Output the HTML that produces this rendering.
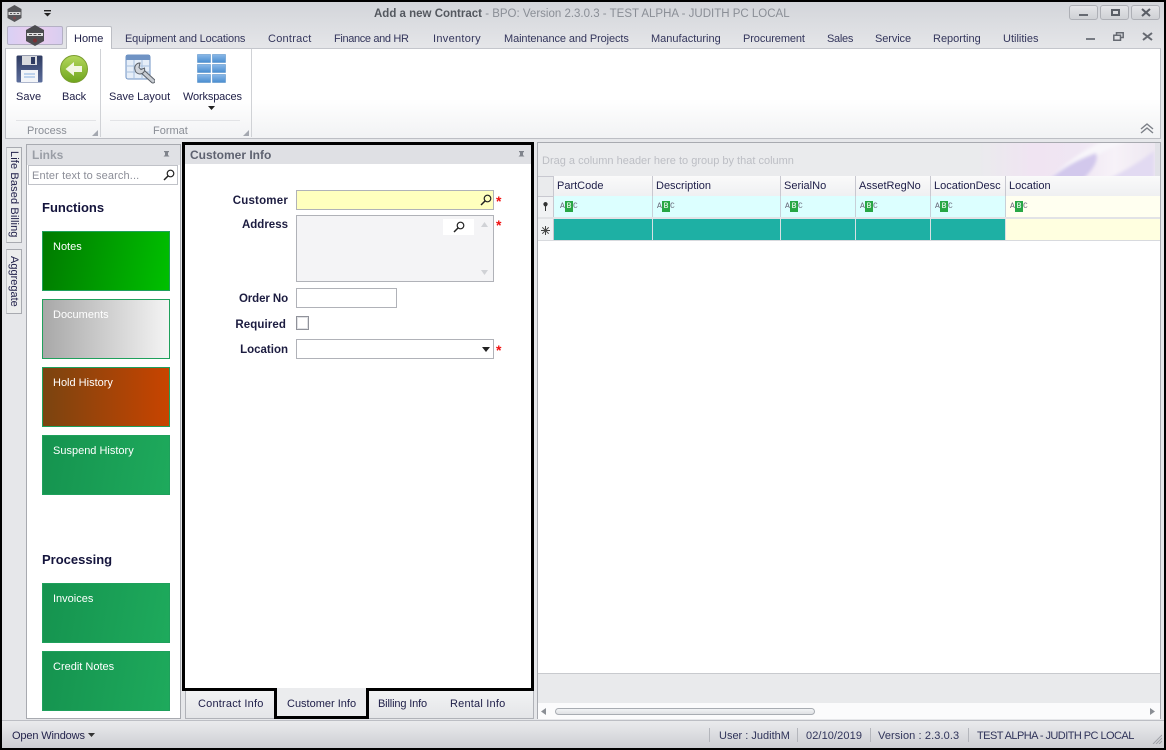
<!DOCTYPE html>
<html><head><meta charset="utf-8"><style>
html,body{margin:0;padding:0;width:1166px;height:750px;overflow:hidden;background:#000}
*{box-sizing:border-box}
body{font-family:"Liberation Sans",sans-serif;font-size:11px;color:#1e1e46}
div,span,svg{position:absolute}
.t{white-space:nowrap;line-height:14px}
.b{font-weight:bold}
.tab{top:32px;color:#34365c}
.tile{left:42px;width:128px;height:60px;border:1px solid #1fa05c;color:#fff}
.tile span{left:10px;top:8px;white-space:nowrap;line-height:14px;font-size:11px}
.lab{font-weight:bold;white-space:nowrap;text-align:right;right:878px;line-height:14px;color:#1c1c40;font-size:11.5px}
.star{color:#f01010;font-weight:bold;left:496px;font-size:14px;line-height:14px}
.hc{top:176px;height:20px;border-right:1px solid #c8c8d0;background:linear-gradient(#fafafa,#eff0f2)}
.hc span{left:3px;top:3px;white-space:nowrap;line-height:14px;font-size:11px;color:#20204a}
.fc{top:196px;height:21px;background:#dcffff;border-right:1px solid #c8d0d8}
.abc{left:7px;top:5px;width:18px;height:11px;font:8px/11px "Liberation Mono",monospace;color:#667}
.abc i{position:absolute;left:5px;top:0;width:8px;height:11px;background:#28a745;color:#fff;font-style:normal;text-align:center;line-height:11px}
.abc u{position:absolute;text-decoration:none;top:0}
.dc{top:219px;height:22px;background:#1eb0a4;border-right:1px solid #d8e0e4}
</style></head><body>
<div id="win" style="left:2px;top:2px;width:1162px;height:746px;background:linear-gradient(#d3d5da 0,#e4e5e8 44px);overflow:hidden">
<div style="left:-2px;top:-2px;width:1166px;height:750px">

<!-- title bar -->
<svg style="left:6px;top:5px" width="17" height="17" viewBox="0 0 17 17"><polygon points="8.5,0 15.5,4 15.5,13 8.5,17 1.5,13 1.5,4" fill="#56565a"/><rect x="2.500" y="7" width="12" height="3" fill="#d8d8d8"/><path d="M4 8.500h2M7.500 8.500h2M11 8.500h2" stroke="#56565a"/><circle cx="8.500" cy="13" r="1.500" fill="#7a4a4c"/></svg>
<svg style="left:43px;top:10px" width="9" height="7" viewBox="0 0 9 7"><rect x="1" y="0" width="7" height="1.4" fill="#222"/><polygon points="1,3 8,3 4.5,6.5" fill="#222"/></svg>
<div class="t" style="left:374px;top:7px;color:#5b6069;font-size:11.5px"><span class="b" style="position:static;color:#54585f">Add a new Contract</span> <span style="position:static;color:#8a8e96">- BPO: Version 2.3.0.3 - TEST ALPHA - JUDITH PC LOCAL</span></div>

<div style="left:1069px;top:5px;width:29px;height:15px;border:1px solid #aeb0b6;border-radius:3px;background:linear-gradient(#e4e5e8,#cfd1d5)"><div style="left:9px;top:8px;width:9px;height:2px;background:#666a72"></div></div>
<div style="left:1100px;top:5px;width:29px;height:15px;border:1px solid #aeb0b6;border-radius:3px;background:linear-gradient(#e4e5e8,#cfd1d5)"><div style="left:10px;top:3px;width:9px;height:7px;border:2px solid #5a5e66"></div></div>
<div style="left:1131px;top:5px;width:29px;height:15px;border:1px solid #aeb0b6;border-radius:3px;background:linear-gradient(#e4e5e8,#cfd1d5)"><svg style="left:9px;top:2px" width="10" height="9" viewBox="0 0 10 9"><path d="M1 1l8 7M9 1l-8 7" stroke="#5a5e66" stroke-width="2"/></svg></div>

<!-- app button -->
<div style="left:7px;top:26px;width:56px;height:19px;border:1px solid #b4b0c4;border-radius:2px;background:linear-gradient(90deg,#d8d0f4,#eccdf0 50%,#d8cef0)"></div>
<svg style="left:25px;top:25px" width="20" height="21" viewBox="0 0 20 21"><polygon points="10,0 19,5 19,16 10,21 1,16 1,5" fill="#4c4c50"/><rect x="2" y="8" width="16" height="3" fill="#e2e2e2"/><path d="M4 9.500h3M8.500 9.500h3M13 9.500h3" stroke="#4c4c50"/><circle cx="10" cy="15.500" r="2" fill="#7a3034"/></svg>

<!-- ribbon tabs -->
<div style="left:66px;top:26px;width:46px;height:23px;background:#fff;border:1px solid #bcbec4;border-bottom:0;border-radius:2px 2px 0 0"></div>
<div class="t" style="left:74px;top:32px;color:#1e1e46">Home</div>
<div class="t tab" style="left:125px;letter-spacing:-.17px">Equipment and Locations</div>
<div class="t tab" style="left:268px;letter-spacing:.25px">Contract</div>
<div class="t tab" style="left:334px;letter-spacing:-.35px">Finance and HR</div>
<div class="t tab" style="left:433px;letter-spacing:.3px">Inventory</div>
<div class="t tab" style="left:504px;letter-spacing:-.1px">Maintenance and Projects</div>
<div class="t tab" style="left:651px">Manufacturing</div>
<div class="t tab" style="left:743px;letter-spacing:-.1px">Procurement</div>
<div class="t tab" style="left:827px;letter-spacing:-.3px">Sales</div>
<div class="t tab" style="left:875px;letter-spacing:-.1px">Service</div>
<div class="t tab" style="left:933px">Reporting</div>
<div class="t tab" style="left:1003px">Utilities</div>
<div style="left:1086px;top:38px;width:9px;height:2px;background:#777b83"></div>
<svg style="left:1113px;top:32px" width="11" height="9" viewBox="0 0 11 9"><path d="M3.5 2.5V.8h6.7v4.7H8M.8 3.2h6.7v5H.8z" fill="none" stroke="#666a72" stroke-width="1.5"/></svg>
<svg style="left:1142px;top:32px" width="11" height="9" viewBox="0 0 11 9"><path d="M1 1l9 7M10 1l-9 7" stroke="#666a72" stroke-width="2"/></svg>

<!-- ribbon body -->
<div style="left:5px;top:48px;width:1156px;height:91px;background:linear-gradient(#fff 0,#fff 50px,#f1f2f4 90px);border:1px solid #bcbec4;border-top:1px solid #c4c6cc"></div>
<div style="left:67px;top:48px;width:44px;height:1px;background:#fff"></div>
<div style="left:100px;top:49px;width:1px;height:88px;background:#d0d2d6"></div>
<div style="left:251px;top:49px;width:1px;height:88px;background:#d0d2d6"></div>
<div style="left:16px;top:120px;width:80px;height:1px;background:#e2e3e6"></div>
<div style="left:110px;top:120px;width:130px;height:1px;background:#e2e3e6"></div>

<!-- save icon -->
<svg style="left:16px;top:55px" width="27" height="28" viewBox="0 0 27 28"><defs><linearGradient id="sv" x1="0" y1="0" x2="0" y2="1"><stop offset="0" stop-color="#2e3a60"/><stop offset="1" stop-color="#5c6e9c"/></linearGradient></defs><path d="M0.500 2q0-1.500 1.500-1.500h23q1.500 0 1.500 1.500v24q0 1.500-1.500 1.500H2q-1.500 0-1.500-1.500z" fill="url(#sv)"/><rect x="6" y="1" width="15" height="9" fill="#d8dade"/><rect x="15" y="2" width="4" height="7" fill="#2e3a60"/><rect x="5" y="15" width="17" height="12" fill="#f2f4f8"/><path d="M8 19h11M8 22h11" stroke="#88b0e0"/></svg>
<div class="t" style="left:16px;top:90px;color:#1e1e46">Save</div>
<!-- back icon -->
<svg style="left:60px;top:55px" width="28" height="28" viewBox="0 0 28 28"><defs><linearGradient id="g" x1="0" y1="0" x2="0" y2="1"><stop offset="0" stop-color="#b4d85c"/><stop offset="1" stop-color="#6ea41c"/></linearGradient></defs><circle cx="14" cy="14" r="13.5" fill="url(#g)" stroke="#7a9c30"/><path d="M5.5 14L14 7v4h8v6h-8v4z" fill="#f2f6e2"/></svg>
<div class="t" style="left:62px;top:90px;color:#1e1e46;letter-spacing:-.1px">Back</div>
<!-- save layout icon -->
<svg style="left:125px;top:54px" width="30" height="30" viewBox="0 0 30 30"><rect x="1" y="1" width="24" height="24" rx="2" fill="#e6eef8" stroke="#6f93c4"/><rect x="1" y="1" width="24" height="5" fill="#6f93c4"/><path d="M1 12h24M1 18h24M9 6v19M17 6v19" stroke="#a8c0de"/><path d="M28 27L17 17" stroke="#5a6068" stroke-width="5" stroke-linecap="round"/><path d="M28 27L17 17" stroke="#c8ccd2" stroke-width="3" stroke-linecap="round"/><path d="M15 9a5 5 0 0 0-5 6.500a5 5 0 0 0 8.500 3a5 5 0 0 0 1-4.500l-3.500 1.500l-2-2z" fill="#d0d4da" stroke="#5a6068"/></svg>
<div class="t" style="left:109px;top:90px;color:#1e1e46">Save Layout</div>
<!-- workspaces icon -->
<svg style="left:197px;top:54px" width="29" height="29" viewBox="0 0 29 29"><defs><linearGradient id="w" x1="0" y1="0" x2="0" y2="1"><stop offset="0" stop-color="#8ab8e8"/><stop offset="1" stop-color="#4a8ed0"/></linearGradient></defs><g fill="url(#w)" stroke="#4a88c4" stroke-width=".5"><rect x=".5" y=".5" width="13" height="8"/><rect x="15.500" y=".5" width="13" height="8"/><rect x=".5" y="10.500" width="13" height="8"/><rect x="15.500" y="10.500" width="13" height="8"/><rect x=".5" y="20.500" width="13" height="8"/><rect x="15.500" y="20.500" width="13" height="8"/></g></svg>
<div class="t" style="left:183px;top:90px;color:#1e1e46;letter-spacing:-.15px">Workspaces</div>
<svg style="left:208px;top:106px" width="8" height="5" viewBox="0 0 8 5"><polygon points="0,0 7,0 3.5,4" fill="#222"/></svg>
<div class="t" style="left:27px;top:124px;color:#8a8e96">Process</div>
<div class="t" style="left:153px;top:124px;color:#8a8e96">Format</div>
<svg style="left:92px;top:130px" width="6" height="6" viewBox="0 0 6 6"><polygon points="6,0 6,6 0,6" fill="#a4a8b0"/></svg>
<svg style="left:243px;top:130px" width="6" height="6" viewBox="0 0 6 6"><polygon points="6,0 6,6 0,6" fill="#a4a8b0"/></svg>
<svg style="left:1140px;top:123px" width="14" height="11" viewBox="0 0 14 11"><path d="M1 6l6-5 6 5M1 10l6-5 6 5" fill="none" stroke="#7c8088" stroke-width="1.4"/></svg>

<!-- main bg -->
<div style="left:5px;top:139px;width:1156px;height:581px;background:#e6e7ea"></div>

<!-- side tabs -->
<div style="left:6px;top:147px;width:16px;height:96px;background:#eceded;border:1px solid #a8aab0;border-left-color:#c4c6ca"></div>
<div class="t" style="left:14px;top:151px;font-size:11px;color:#20204a;letter-spacing:.12px;transform-origin:0 0;transform:translate(7px,0) rotate(90deg)">Life Based Billing</div>
<div style="left:6px;top:249px;width:16px;height:65px;background:#eceded;border:1px solid #a8aab0;border-left-color:#c4c6ca"></div>
<div class="t" style="left:14px;top:256px;font-size:11px;color:#20204a;transform-origin:0 0;transform:translate(7px,0) rotate(90deg)">Aggregate</div>

<!-- links panel -->
<div style="left:26px;top:144px;width:155px;height:575px;background:#fff;border:1px solid #a8aab0"></div>
<div style="left:27px;top:145px;width:153px;height:20px;background:#e0e1e5"></div>
<div class="t b" style="left:32px;top:148px;color:#9a9ea6;font-size:12px">Links</div>
<svg style="left:162px;top:150px" width="9" height="10" viewBox="0 0 9 10"><path d="M2 1h5v1l-1 .5V5l1.500 1.500H1.500L3 5V2.500L2 2zM4.500 6.500V10" fill="#80848c"/></svg>
<div style="left:28px;top:165px;width:150px;height:20px;background:#fff;border:1px solid #c0c2c8"></div>
<div class="t" style="left:32px;top:169px;color:#8c8e98;letter-spacing:.12px">Enter text to search...</div>
<svg style="left:163px;top:169px" width="12" height="12" viewBox="0 0 12 12"><circle cx="7.500" cy="4.500" r="3.300" fill="none" stroke="#222" stroke-width="1.200"/><path d="M5 7L1 11" stroke="#222" stroke-width="1.500"/></svg>
<div class="t b" style="left:42px;top:201px;font-size:13px;color:#14143c">Functions</div>
<div class="tile" style="top:231px;background:linear-gradient(100deg,#007a00,#00c000)"><span>Notes</span></div>
<div class="tile" style="top:299px;background:linear-gradient(90deg,#a8a8a8,#f4f4f4)"><span>Documents</span></div>
<div class="tile" style="top:367px;background:linear-gradient(90deg,#7a4410,#c84400)"><span>Hold History</span></div>
<div class="tile" style="top:435px;background:linear-gradient(100deg,#15934f,#1eaa5c)"><span>Suspend History</span></div>
<div class="t b" style="left:42px;top:553px;font-size:13px;color:#14143c">Processing</div>
<div class="tile" style="top:583px;background:linear-gradient(100deg,#15934f,#1eaa5c)"><span>Invoices</span></div>
<div class="tile" style="top:651px;background:linear-gradient(100deg,#15934f,#1eaa5c)"><span>Credit Notes</span></div>

<!-- customer info panel -->
<div style="left:185px;top:145px;width:346px;height:543px;background:#fff"></div>
<div style="left:185px;top:145px;width:346px;height:19px;background:#dfe0e4"></div>
<div class="t b" style="left:190px;top:148px;color:#5e6270;font-size:12px">Customer Info</div>
<svg style="left:517px;top:150px" width="9" height="10" viewBox="0 0 9 10"><path d="M2 1h5v1l-1 .5V5l1.500 1.500H1.500L3 5V2.500L2 2zM4.500 6.500V10" fill="#80848c"/></svg>

<div class="lab" style="top:194px;letter-spacing:.2px">Customer</div>
<div style="left:296px;top:190px;width:198px;height:20px;background:#ffffbe;border:1px solid #b0b2b8"></div>
<svg style="left:480px;top:194px" width="12" height="12" viewBox="0 0 12 12"><circle cx="7.500" cy="4.500" r="3.300" fill="none" stroke="#222" stroke-width="1.200"/><path d="M5 7L1 11" stroke="#222" stroke-width="1.500"/></svg>
<div class="star" style="top:194px">*</div>

<div class="lab" style="top:218px">Address</div>
<div style="left:296px;top:215px;width:198px;height:67px;background:#f4f4f6;border:1px solid #b0b2b8"></div>
<div style="left:443px;top:219px;width:31px;height:16px;background:#fff"></div>
<svg style="left:453px;top:221px" width="12" height="12" viewBox="0 0 12 12"><circle cx="7.500" cy="4.500" r="3.300" fill="none" stroke="#222" stroke-width="1.200"/><path d="M5 7L1 11" stroke="#222" stroke-width="1.500"/></svg>
<svg style="left:481px;top:222px" width="7" height="5" viewBox="0 0 7 5"><polygon points="0,5 7,5 3.500,0" fill="#d0d2d6"/></svg>
<svg style="left:481px;top:270px" width="7" height="5" viewBox="0 0 7 5"><polygon points="0,0 7,0 3.500,5" fill="#d0d2d6"/></svg>
<div class="star" style="top:218px">*</div>

<div class="lab" style="top:292px;letter-spacing:-.1px">Order No</div>
<div style="left:296px;top:288px;width:101px;height:20px;background:#fff;border:1px solid #b0b2b8"></div>

<div class="lab" style="top:318px;right:880px;letter-spacing:.1px">Required</div>
<div style="left:296px;top:316px;width:13px;height:14px;background:#fff;border:1px solid #90929a;box-shadow:inset 0 0 0 1px #e0e1e4"></div>

<div class="lab" style="top:343px">Location</div>
<div style="left:296px;top:339px;width:198px;height:20px;background:#fff;border:1px solid #b0b2b8"></div>
<svg style="left:482px;top:347px" width="8" height="5" viewBox="0 0 8 5"><polygon points="0,0 8,0 4,5" fill="#222"/></svg>
<div class="star" style="top:343px">*</div>

<!-- black highlight around panel -->
<div style="left:182px;top:142px;width:352px;height:3px;background:#000"></div>
<div style="left:182px;top:142px;width:3px;height:549px;background:#000"></div>
<div style="left:531px;top:142px;width:3px;height:549px;background:#000"></div>
<div style="left:182px;top:688px;width:95px;height:3px;background:#000"></div>
<div style="left:366px;top:688px;width:168px;height:3px;background:#000"></div>

<!-- bottom tabs -->
<div style="left:185px;top:691px;width:349px;height:28px;background:linear-gradient(#f2f3f4,#e4e5e8);border-bottom:1px solid #b0b2b8;border-right:1px solid #b0b2b8;border-left:1px solid #b0b2b8"></div>
<div style="left:277px;top:688px;width:89px;height:29px;background:#ebecee"></div>
<div style="left:274px;top:688px;width:3px;height:31px;background:#000"></div>
<div style="left:366px;top:688px;width:3px;height:31px;background:#000"></div>
<div style="left:274px;top:716px;width:95px;height:3px;background:#000"></div>
<div class="t" style="left:198px;top:697px;color:#20204a;letter-spacing:.2px">Contract Info</div>
<div class="t" style="left:287px;top:697px;color:#20204a">Customer Info</div>
<div class="t" style="left:378px;top:697px;color:#20204a;letter-spacing:-.15px">Billing Info</div>
<div class="t" style="left:450px;top:697px;color:#20204a;letter-spacing:.2px">Rental Info</div>

<!-- grid -->
<div style="left:537px;top:142px;width:624px;height:577px;background:#fff;border:1px solid #a8aab0"></div>
<div style="left:538px;top:143px;width:622px;height:33px;background:#eaebed"></div>
<svg style="left:538px;top:143px" width="622" height="33" viewBox="0 0 622 33"><defs><linearGradient id="dk" x1="0" y1="0" x2="1" y2="0"><stop offset="0" stop-color="#eaebed"/><stop offset=".3" stop-color="#f0e4f2"/><stop offset=".55" stop-color="#efe6f3"/><stop offset=".75" stop-color="#f7f2f8"/><stop offset="1" stop-color="#ece6f0"/></linearGradient><filter id="bl" x="-20%" y="-20%" width="140%" height="140%"><feGaussianBlur stdDeviation="1.500"/></filter></defs><rect x="440" y="0" width="182" height="33" fill="url(#dk)"/><g filter="url(#bl)"><path d="M512 36Q535 12 565 -2L590 -2Q545 15 535 36Z" fill="#f8f6fa"/><path d="M512 36Q530 20 558 10Q562 20 545 36Z" fill="#d2c8ec"/><path d="M570 36Q595 24 616 8V36Z" fill="#e2daf2"/></g><rect x="617" y="0" width="5" height="33" fill="#e2e2e8"/></svg>
<div class="t" style="left:542px;top:154px;color:#bcbec4">Drag a column header here to group by that column</div>

<div style="left:538px;top:176px;width:622px;height:20px;background:linear-gradient(#fafafa,#eff0f2);border-top:1px solid #c8c8d0"></div>
<div style="left:538px;top:176px;width:16px;height:20px;background:#eaebed;border-right:1px solid #c8c8d0;border-top:1px solid #c8c8d0"></div>
<div class="hc" style="left:554px;width:99px"><span>PartCode</span></div>
<div class="hc" style="left:653px;width:128px"><span>Description</span></div>
<div class="hc" style="left:781px;width:75px"><span>SerialNo</span></div>
<div class="hc" style="left:856px;width:75px"><span>AssetRegNo</span></div>
<div class="hc" style="left:931px;width:75px"><span>LocationDesc</span></div>
<div class="hc" style="left:1006px;width:154px;border-right:0"><span>Location</span></div>

<div style="left:538px;top:196px;width:16px;height:21px;background:#f1f2f4;border-right:1px solid #c8c8d0;border-top:1px solid #c8c8d0"></div>
<svg style="left:542px;top:202px" width="7" height="9" viewBox="0 0 7 9"><path d="M3.500 0a2.200 2.200 0 0 1 1.500 3.800L4 4.500V9H3V4.500L2 3.800A2.200 2.200 0 0 1 3.500 0z" fill="#333"/></svg>
<div class="fc" style="left:554px;width:99px"><span class="abc" style="left:6px"><u style="left:0">A</u><i>B</i><u style="left:13px">C</u></span></div>
<div class="fc" style="left:653px;width:128px"><span class="abc" style="left:4px"><u style="left:0">A</u><i>B</i><u style="left:13px">C</u></span></div>
<div class="fc" style="left:781px;width:75px"><span class="abc" style="left:4px"><u style="left:0">A</u><i>B</i><u style="left:13px">C</u></span></div>
<div class="fc" style="left:856px;width:75px"><span class="abc" style="left:4px"><u style="left:0">A</u><i>B</i><u style="left:13px">C</u></span></div>
<div class="fc" style="left:931px;width:75px"><span class="abc" style="left:4px"><u style="left:0">A</u><i>B</i><u style="left:13px">C</u></span></div>
<div class="fc" style="left:1006px;width:154px;background:#fffff0;border-right:0"><span class="abc" style="left:4px"><u style="left:0">A</u><i>B</i><u style="left:13px">C</u></span></div>

<div style="left:538px;top:217px;width:622px;height:2px;background:#e2e3e6"></div>
<div style="left:538px;top:219px;width:16px;height:22px;background:#f1f2f4;border-right:1px solid #c8c8d0"></div>
<svg style="left:541px;top:226px" width="9" height="9" viewBox="0 0 9 9"><path d="M4.500 0v9M0 4.500h9M1.300 1.300l6.400 6.400M7.700 1.300l-6.400 6.400" stroke="#444" stroke-width="1"/></svg>
<div class="dc" style="left:554px;width:99px"></div>
<div class="dc" style="left:653px;width:128px"></div>
<div class="dc" style="left:781px;width:75px"></div>
<div class="dc" style="left:856px;width:75px"></div>
<div class="dc" style="left:931px;width:75px"></div>
<div style="left:1006px;top:219px;width:154px;height:22px;background:#ffffe0"></div>
<div style="left:538px;top:240px;width:622px;height:1px;background:#d8dade"></div>

<!-- grid footer + scrollbar -->
<div style="left:538px;top:673px;width:622px;height:30px;background:#e9eaec;border-top:1px solid #c8cace"></div>
<div style="left:538px;top:703px;width:622px;height:16px;background:#fbfbfc"></div>
<div style="left:555px;top:708px;width:260px;height:7px;background:linear-gradient(#f2f3f5,#dfe1e4);border:1px solid #a8acb2;border-radius:4px"></div>
<svg style="left:541px;top:708px" width="5" height="7" viewBox="0 0 5 7"><polygon points="5,0 5,7 0,3.500" fill="#8a8e94"/></svg>
<svg style="left:1150px;top:708px" width="5" height="7" viewBox="0 0 5 7"><polygon points="0,0 0,7 5,3.500" fill="#8a8e94"/></svg>

<!-- status bar -->
<div style="left:2px;top:721px;width:1162px;height:27px;background:linear-gradient(#eaebed,#cdced3)"></div>
<div style="left:2px;top:720px;width:1162px;height:1px;background:#bcbec4"></div>
<div class="t" style="left:12px;top:729px;color:#24244c;letter-spacing:-.15px">Open Windows</div>
<svg style="left:88px;top:733px" width="7" height="4" viewBox="0 0 7 4"><polygon points="0,0 7,0 3.500,4" fill="#333"/></svg>
<div style="left:709px;top:728px;width:1px;height:14px;background:#b4b6bc"></div>
<div class="t" style="left:719px;top:729px;color:#30345a">User : JudithM</div>
<div style="left:797px;top:728px;width:1px;height:14px;background:#b4b6bc"></div>
<div class="t" style="left:806px;top:729px;color:#30345a;letter-spacing:.1px">02/10/2019</div>
<div style="left:870px;top:728px;width:1px;height:14px;background:#b4b6bc"></div>
<div class="t" style="left:878px;top:729px;color:#30345a;letter-spacing:.1px">Version : 2.3.0.3</div>
<div style="left:968px;top:728px;width:1px;height:14px;background:#b4b6bc"></div>
<div class="t" style="left:977px;top:729px;color:#30345a;letter-spacing:-.55px">TEST ALPHA - JUDITH PC LOCAL</div>
<svg style="left:1152px;top:734px" width="10" height="10" viewBox="0 0 10 10"><path d="M1 10L10 1M4 10l6-6M7 10l3-3" stroke="#a0a2a8"/></svg>
</div>
</div>
</body></html>
